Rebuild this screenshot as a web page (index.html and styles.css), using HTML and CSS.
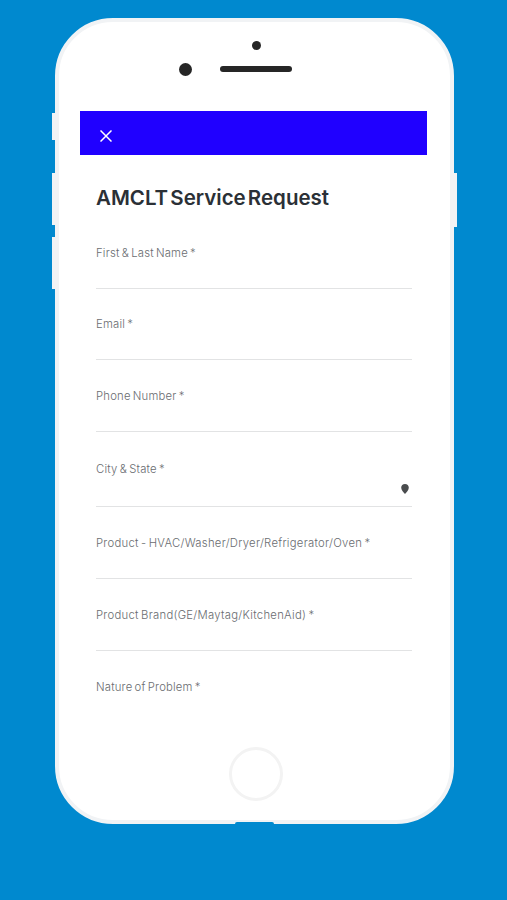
FILE: index.html
```html
<!DOCTYPE html>
<html lang="en">
<head>
    <meta charset="UTF-8">
    <meta name="viewport" content="width=device-width, initial-scale=1.0">
    <title>AMCLT Service Request</title>
    <link rel="stylesheet" href="styles.css">
</head>
<body>
    <div class="phone">
        <span class="side-btn mute"></span>
        <span class="side-btn volume-up"></span>
        <span class="side-btn volume-down"></span>
        <span class="side-btn power"></span>
        <div class="phone-top">
            <span class="camera"></span>
            <span class="sensor"></span>
            <span class="speaker"></span>
        </div>
        <div class="screen">
            <header class="top-bar">
                <svg class="close" viewBox="0 0 12 12"><path d="M0.5 0.5 11.5 11.5M11.5 0.5 0.5 11.5"/></svg>
            </header>
            <form class="request-form">
                <h1>AMCLT Service Request</h1>
                <div class="field"><label>First &amp; Last Name *</label></div>
                <div class="field short"><label>Email *</label></div>
                <div class="field"><label>Phone Number *</label></div>
                <div class="field tall">
                    <label>City &amp; State *</label>
                    <svg class="pin" viewBox="0 0 8 10"><path d="M4 0C1.7 0 .2 1.7 .2 3.7.2 6.2 2.7 8.4 4 10 5.3 8.4 7.8 6.2 7.8 3.7 7.8 1.7 6.3 0 4 0Z"/></svg>
                </div>
                <div class="field"><label class="wide">Product - HVAC/Washer/Dryer/Refrigerator/Oven *</label></div>
                <div class="field"><label class="wide">Product Brand(GE/Maytag/KitchenAid) *</label></div>
                <div class="field last"><label>Nature of Problem *</label></div>
            </form>
        </div>
        <div class="home-btn"></div>
        <span class="port"></span>
    </div>
</body>
</html>
```

FILE: styles.css
```css
* {
    box-sizing: border-box;
}
body {
    font-family: Inter, "Liberation Sans", sans-serif;
    background-color: #0089cf;
    margin: 0;
    height: 900px;
    padding: 18px 0 0 55px;
    overflow: hidden;
}
.phone {
    position: relative;
    width: 399px;
    height: 806px;
    background: #fff;
    border: 4px solid #f1f3f5;
    border-radius: 58px;
    display: flex;
    flex-direction: column;
    align-items: center;
}
.side-btn {
    position: absolute;
    left: -7px;
    width: 4px;
    background: #f1f3f5;
}
.mute {
    top: 91px;
    height: 27px;
}
.volume-up {
    top: 151px;
    height: 52px;
}
.volume-down {
    top: 215px;
    height: 52px;
}
.power {
    left: auto;
    right: -7px;
    top: 151px;
    height: 54px;
}
.phone-top {
    width: 143px;
    height: 89px;
    padding-top: 19px;
    display: grid;
    grid-template-columns: 35px 1fr 35px;
    grid-template-rows: 9px 38px;
    justify-items: center;
    align-items: center;
    margin-left: 3px;
}
.camera {
    grid-column: 2;
    width: 9px;
    height: 9px;
    border-radius: 50%;
    background: #262626;
}
.sensor {
    grid-row: 2;
    grid-column: 1;
    justify-self: start;
    width: 13px;
    height: 13px;
    margin-left: -6px;
    border-radius: 50%;
    background: #262626;
}
.speaker {
    grid-row: 2;
    grid-column: 2;
    width: 72px;
    height: 6px;
    border-radius: 3px;
    background: #262626;
}
.screen {
    width: 347px;
    height: 600px;
    margin-right: 2px;
}
.top-bar {
    height: 44px;
    padding: 19px 20px 0;
    background: #2000ff;
}
.close {
    display: block;
    width: 12px;
    height: 12px;
    fill: none;
    stroke: #fff;
    stroke-width: 1.5;
}
.request-form {
    padding: 0 15px 0 16px;
}
h1 {
    height: 62px;
    margin: 0;
    padding-top: 30px;
    font-size: 20.5px;
    font-weight: 600;
    line-height: 25px;
    word-spacing: -3px;
    color: #2b3036;
    white-space: nowrap;
}
.field {
    display: flex;
    align-items: center;
    justify-content: space-between;
    height: 72px;
    border-bottom: 1px solid #e2e3e4;
}
.field.short {
    height: 71px;
}
.field.tall {
    height: 75px;
}
.field.last {
    border-bottom: none;
}
label {
    font-size: 11.3px;
    font-weight: 300;
    line-height: 16px;
    letter-spacing: 0.2px;
    word-spacing: -1.2px;
    color: #696c70;
    white-space: nowrap;
}
.wide {
    letter-spacing: 0.28px;
}
.pin {
    width: 8px;
    height: 10px;
    margin: 40px 3px 0 0;
    fill: #4a4c4e;
}
.home-btn {
    width: 54px;
    height: 54px;
    margin-top: 36px;
    margin-left: 3px;
    border: 3px solid #f3f3f3;
    border-radius: 50%;
}
.port {
    position: absolute;
    bottom: -4px;
    left: 176px;
    width: 39px;
    height: 2px;
    border-radius: 2px 2px 0 0;
    background: #0089cf;
}
```
